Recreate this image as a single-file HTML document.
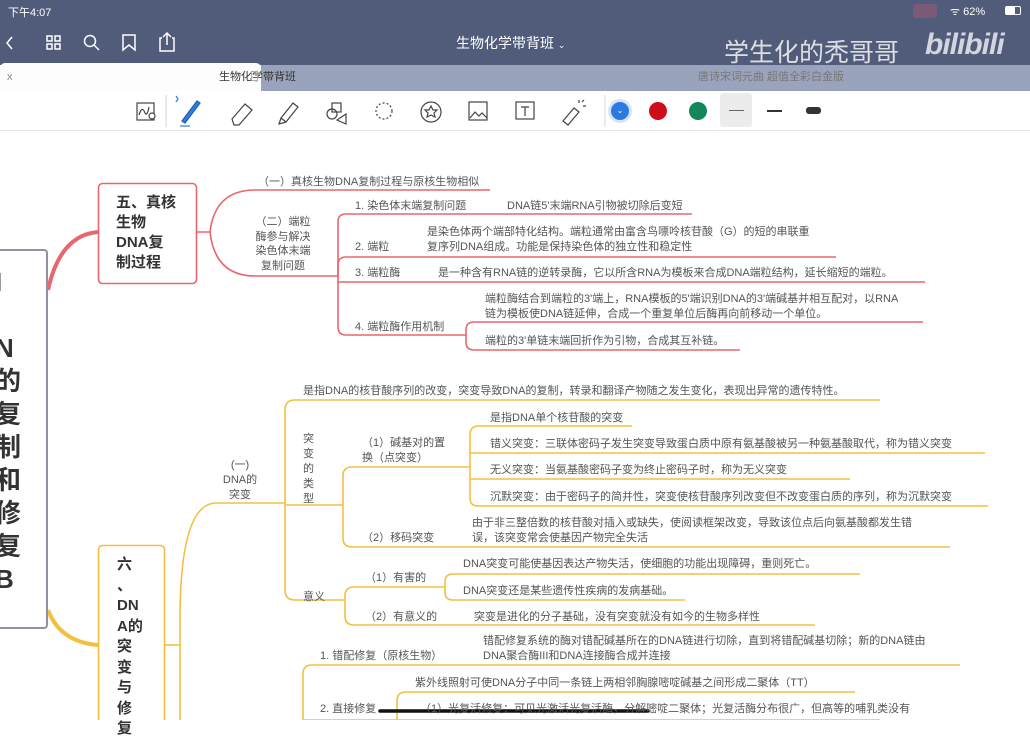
<!DOCTYPE html>
<html><head><meta charset="utf-8"><style>
*{margin:0;padding:0;box-sizing:border-box}
body{width:1030px;height:720px;overflow:hidden;background:#fff;position:relative;font-family:"Liberation Sans","Noto Sans CJK SC",sans-serif;color:#555}
.t{position:absolute;font-size:11px;line-height:15px;white-space:nowrap;color:#555}
.w{position:absolute;color:#fff;white-space:nowrap}
</style></head><body>
<div style="position:absolute;left:0;top:0;width:1030px;height:65px;background:#515c7b"></div>
<div class="w" style="left:8px;top:4px;font-size:11px">下午4:07</div>
<div style="position:absolute;left:913px;top:4px;width:24px;height:14px;background:#7b5a78;border-radius:3px"></div>
<div class="w" style="left:950px;top:4px;font-size:11px">ᯤ 62%</div>
<div style="position:absolute;left:1005px;top:6px;width:16px;height:9px;border:1px solid #fff;border-radius:2px"><div style="width:9px;height:100%;background:#fff"></div></div>
<svg style="position:absolute;left:0;top:28px" width="200" height="30" fill="none" stroke="#fff" stroke-width="1.5">
<path d="M12 9 L7 15 L12 21"/>
<rect x="47" y="8" width="5" height="5"/><rect x="55" y="8" width="5" height="5"/><rect x="47" y="16" width="5" height="5"/><rect x="55" y="16" width="5" height="5"/>
<circle cx="90" cy="13" r="5.5"/><path d="M94 17 L99 22"/>
<path d="M123 7 V22 L129 17 L135 22 V7 Z"/>
<path d="M162 10 H160 V23 H174 V10 H172 M167 17 V5 M163 9 L167 5 L171 9"/>
</svg>
<div class="w" style="left:456px;top:33px;font-size:14px">生物化学带背班 <span style="font-size:9px">⌄</span></div>
<div class="w" style="left:724px;top:33px;font-size:25px;opacity:.8">学生化的秃哥哥</div>
<div class="w" style="left:925px;top:28px;font-size:30px;font-weight:bold;font-style:italic;opacity:.75;letter-spacing:-1px">bilibili</div>
<div style="position:absolute;left:0;top:63px;width:261px;height:28px;background:#fdfdfd;border-radius:5px 5px 0 0"></div>
<div style="position:absolute;left:261px;top:65px;width:769px;height:26px;background:#9aa3bc"></div>
<div class="t" style="left:7px;top:70px;color:#888">x</div>
<div class="t" style="left:219px;top:70px;color:#333">生物化学带背班</div>
<div style="position:absolute;left:251px;top:71px;width:7px;height:10px;border:1px solid #aaa"></div>
<div class="t" style="left:266px;top:70px;color:#777">x</div>
<div class="t" style="left:698px;top:70px;color:#777">唐诗宋词元曲 超值全彩白金版</div>
<div style="position:absolute;left:0;top:91px;width:1030px;height:40px;background:#fff;border-bottom:1px solid #e3e3e3"></div>
<svg style="position:absolute;left:0;top:91px" width="1030" height="40" fill="none" stroke="#444" stroke-width="1.2">
<rect x="137" y="12" width="17" height="17"/><path d="M139 24 q3 -10 6 -2 q2 4 4 -6"/><circle cx="152" cy="25" r="3" fill="#fff"/>
<line x1="166" y1="4" x2="166" y2="36" stroke="#ddd"/>
<path d="M182 30 L197 10 L200 12 L185 32 Z" fill="#2f7de1" stroke="#1d5fb5"/><path d="M180 35 H190" stroke="#2f7de1"/><path d="M176 5 l2 3 l-2 3" stroke="#2f7de1"/>
<path d="M232 28 L245 13 L252 19 L239 34 L234 34 Z"/>
<path d="M281 27 L293 12 L298 16 L286 31 Z M281 27 L279 33 L286 31"/>
<rect x="332" y="12" width="9" height="9"/><circle cx="332" cy="23" r="5"/><path d="M337 29 L346 23 V33 Z"/>
<circle cx="384" cy="20" r="8" stroke-dasharray="2 2"/>
<circle cx="431" cy="21" r="10"/><path d="M431 15 l2 4 h4 l-3 3 l1 4 l-4 -2 l-4 2 l1 -4 l-3 -3 h4 z"/>
<rect x="469" y="11" width="18" height="18"/><path d="M470 27 l5 -6 l4 4 l3 -3 l5 5"/>
<rect x="516" y="11" width="18" height="17"/><path d="M521 16 h8 M525 16 v9"/>
<path d="M563 30 L574 17 L579 21 L568 34 Z"/><path d="M579 12 v-3 M583 15 h3 M582 11 l2 -2"/>
<line x1="605" y1="4" x2="605" y2="36" stroke="#ddd"/>
</svg>
<div style="position:absolute;left:608px;top:99px;width:24px;height:24px;border-radius:50%;background:#d6e4f7"></div>
<div style="position:absolute;left:611px;top:102px;width:18px;height:18px;border-radius:50%;background:#2c7ae0;color:#fff;font-size:8px;text-align:center;line-height:18px">⌄</div>
<div style="position:absolute;left:649px;top:102px;width:18px;height:18px;border-radius:50%;background:#cf0d1a"></div>
<div style="position:absolute;left:689px;top:102px;width:18px;height:18px;border-radius:50%;background:#14875a"></div>
<div style="position:absolute;left:720px;top:93px;width:32px;height:34px;background:#ececec;border-radius:3px"></div>
<div style="position:absolute;left:729px;top:110px;width:15px;height:1px;background:#666"></div>
<div style="position:absolute;left:767px;top:110px;width:15px;height:2px;background:#333"></div>
<div style="position:absolute;left:806px;top:107px;width:15px;height:7px;background:#333;border-radius:3px"></div>

<svg style="position:absolute;left:0;top:0" width="1030" height="720" fill="none">
<g stroke="#e8666d" stroke-width="1.6">
<path d="M48 290 Q60 235 98 232" stroke-width="4"/>
<rect x="98.5" y="183.5" width="98" height="100" rx="4" fill="#fff"/>
<path d="M196 232 H210 Q215 190 255 190 H490"/>
<path d="M210 232 Q215 276 255 276 H338"/>
<path d="M338 276 V222 Q338 214 346 214 H692"/>
<path d="M338 276 V265 Q338 257 346 257 H836"/>
<path d="M338 282 H925"/>
<path d="M338 276 V327 Q338 335 346 335 H466"/>
<path d="M466 335 V330 Q466 322 474 322 H923"/>
<path d="M466 335 V342 Q466 350 474 350 H740"/>
</g>
<g stroke="#f4bf3e" stroke-width="1.6">
<path d="M48 610 Q60 642 98 645" stroke-width="4"/>
<rect x="98.5" y="545.5" width="66" height="190" rx="4" fill="#fff"/>
<path d="M165 645 H180"/>
<path d="M180 720 V620 Q180 505 215 503 H285"/>
<path d="M285 503 V410 Q285 400 295 400 H880"/>
<path d="M285 505 H343"/>
<path d="M343 505 V476 Q343 467 352 467 H470"/>
<path d="M470 467 V435 Q470 426 479 426 H632"/>
<path d="M470 453 H985"/>
<path d="M470 479 H850"/>
<path d="M470 467 V498 Q470 506 478 506 H988"/>
<path d="M343 505 V538 Q343 547 352 547 H950"/>
<path d="M285 503 V590 Q285 600 295 600 H345"/>
<path d="M345 600 V596 Q345 587 354 587 H445"/>
<path d="M445 587 V582 Q445 574 453 574 H860"/>
<path d="M445 587 V592 Q445 600 453 600 H685"/>
<path d="M345 600 V616 Q345 625 354 625 H815"/>
<path d="M303 720 V674 Q303 665 312 665 H960"/>
<path d="M303 720 H880"/>
<path d="M397 720 V701 Q397 692 406 692 H855"/>
</g>
<path d="M380 711 L648 711" stroke="#111" stroke-width="3.5" stroke-linecap="round"/>
</svg>
<div style="position:absolute;left:-8px;top:249px;width:56px;height:380px;border:2px solid #8d93a3;border-radius:4px;background:#fff"></div>
<div style="position:absolute;left:-5px;top:266px;font-size:26px;font-weight:bold;color:#333;line-height:33px;width:30px">I<br>&nbsp;<br>N<br>的<br>复<br>制<br>和<br>修<br>复<br>B</div>
<div style="position:absolute;left:116px;top:193px;font-size:15px;font-weight:bold;color:#333;line-height:20px;width:70px">五、真核<br>生物<br>DNA复<br>制过程</div>
<div style="position:absolute;left:117px;top:555px;font-size:15px;font-weight:bold;color:#333;line-height:20.5px;width:40px">六<br>、<br>DN<br>A的<br>突<br>变<br>与<br>修<br>复</div>
<div class="t" style="left:258px;top:175px">（一）真核生物DNA复制过程与原核生物相似</div>
<div class="t" style="left:253px;top:215px;text-align:center;width:60px;line-height:14.5px">（二）端粒<br>酶参与解决<br>染色体末端<br>复制问题</div>
<div class="t" style="left:355px;top:199px">1. 染色体末端复制问题</div>
<div class="t" style="left:507px;top:199px">DNA链5'末端RNA引物被切除后变短</div>
<div class="t" style="left:427px;top:225px">是染色体两个端部特化结构。端粒通常由富含鸟嘌呤核苷酸（G）的短的串联重<br>复序列DNA组成。功能是保持染色体的独立性和稳定性</div>
<div class="t" style="left:355px;top:240px">2. 端粒</div>
<div class="t" style="left:355px;top:266px">3. 端粒酶</div>
<div class="t" style="left:438px;top:266px">是一种含有RNA链的逆转录酶，它以所含RNA为模板来合成DNA端粒结构，延长缩短的端粒。</div>
<div class="t" style="left:355px;top:320px">4. 端粒酶作用机制</div>
<div class="t" style="left:485px;top:292px">端粒酶结合到端粒的3'端上，RNA模板的5'端识别DNA的3'端碱基并相互配对，以RNA<br>链为模板使DNA链延伸，合成一个重复单位后酶再向前移动一个单位。</div>
<div class="t" style="left:485px;top:334px">端粒的3'单链末端回折作为引物，合成其互补链。</div>
<div class="t" style="left:303px;top:384px">是指DNA的核苷酸序列的改变，突变导致DNA的复制，转录和翻译产物随之发生变化，表现出异常的遗传特性。</div>
<div class="t" style="left:222px;top:458px;line-height:15px;text-align:center;width:36px">(一)<br>DNA的<br>突变</div>
<div class="t" style="left:303px;top:432px;line-height:15px;width:12px;white-space:normal">突变的类型</div>
<div class="t" style="left:362px;top:436px;line-height:15px">（1）碱基对的置<br>换（点突变）</div>
<div class="t" style="left:490px;top:411px">是指DNA单个核苷酸的突变</div>
<div class="t" style="left:490px;top:437px">错义突变：三联体密码子发生突变导致蛋白质中原有氨基酸被另一种氨基酸取代，称为错义突变</div>
<div class="t" style="left:490px;top:463px">无义突变：当氨基酸密码子变为终止密码子时，称为无义突变</div>
<div class="t" style="left:490px;top:490px">沉默突变：由于密码子的简并性，突变使核苷酸序列改变但不改变蛋白质的序列，称为沉默突变</div>
<div class="t" style="left:362px;top:531px">（2）移码突变</div>
<div class="t" style="left:472px;top:516px">由于非三整倍数的核苷酸对插入或缺失，使阅读框架改变，导致该位点后向氨基酸都发生错<br>误，该突变常会使基因产物完全失活</div>
<div class="t" style="left:303px;top:590px">意义</div>
<div class="t" style="left:365px;top:571px">（1）有害的</div>
<div class="t" style="left:463px;top:557px">DNA突变可能使基因表达产物失活，使细胞的功能出现障碍，重则死亡。</div>
<div class="t" style="left:463px;top:584px">DNA突变还是某些遗传性疾病的发病基础。</div>
<div class="t" style="left:365px;top:610px">（2）有意义的</div>
<div class="t" style="left:474px;top:610px">突变是进化的分子基础，没有突变就没有如今的生物多样性</div>
<div class="t" style="left:320px;top:649px">1. 错配修复（原核生物）</div>
<div class="t" style="left:483px;top:634px">错配修复系统的酶对错配碱基所在的DNA链进行切除，直到将错配碱基切除；新的DNA链由<br>DNA聚合酶III和DNA连接酶合成并连接</div>
<div class="t" style="left:415px;top:676px">紫外线照射可使DNA分子中同一条链上两相邻胸腺嘧啶碱基之间形成二聚体（TT）</div>
<div class="t" style="left:320px;top:702px">2. 直接修复</div>
<div class="t" style="left:420px;top:702px">（1）光复活修复：可见光激活光复活酶，分解嘧啶二聚体；光复活酶分布很广，但高等的哺乳类没有</div>
</body></html>
